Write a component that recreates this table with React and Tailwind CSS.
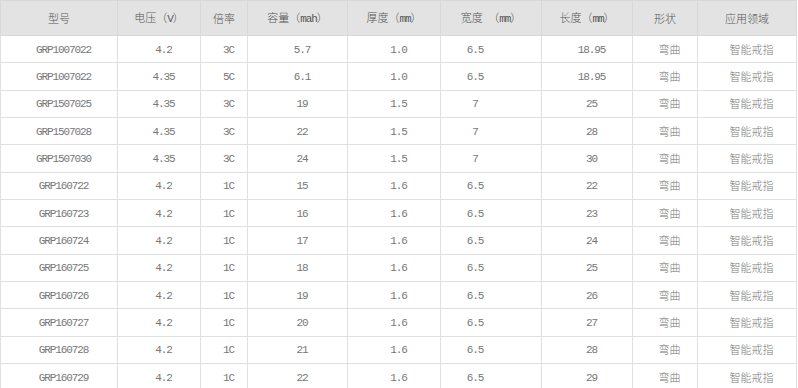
import React from "react";

const rows = [
  ["GRP1007022", "4.2", "3C", "5.7", "1.0", "6.5", "18.95"],
  ["GRP1007022", "4.35", "5C", "6.1", "1.0", "6.5", "18.95"],
  ["GRP1507025", "4.35", "3C", "19", "1.5", "7", "25"],
  ["GRP1507028", "4.35", "3C", "22", "1.5", "7", "28"],
  ["GRP1507030", "4.35", "3C", "24", "1.5", "7", "30"],
  ["GRP160722", "4.2", "1C", "15", "1.6", "6.5", "22"],
  ["GRP160723", "4.2", "1C", "16", "1.6", "6.5", "23"],
  ["GRP160724", "4.2", "1C", "17", "1.6", "6.5", "24"],
  ["GRP160725", "4.2", "1C", "18", "1.6", "6.5", "25"],
  ["GRP160726", "4.2", "1C", "19", "1.6", "6.5", "26"],
  ["GRP160727", "4.2", "1C", "20", "1.6", "6.5", "27"],
  ["GRP160728", "4.2", "1C", "21", "1.6", "6.5", "28"],
  ["GRP160729", "4.2", "1C", "22", "1.6", "6.5", "29"],
];

const headers = ["型号", "电压（V）", "倍率", "容量（mah）", "厚度（mm）", "宽度 （mm）", "长度（mm）", "形状", "应用领域"];
const widths = ["w-[117px]", "w-[83px]", "w-[47px]", "w-[100px]", "w-[93px]", "w-[101px]", "w-[91px]", "w-[65px]", "w-[99px]"];

function T({ s }) {
  const parts = s.match(/[\x00-\x7f]+|[^\x00-\x7f]+/g) || [];
  return (
    <>
      {parts.map((p, i) =>
        /^[\x00-\x7f]+$/.test(p) ? (
          <span key={i} className="font-['Liberation_Mono',monospace] tracking-[-1.1px] whitespace-pre">{p}</span>
        ) : (
          <span key={i} className="font-['Noto_Sans_CJK_SC',sans-serif] font-light">{p}</span>
        )
      )}
    </>
  );
}

export default function App() {
  return (
    <div className="w-[798px] h-[388px] overflow-hidden bg-white">
      <table className="table-fixed border-collapse w-[796px] text-[11px] leading-none">
        <colgroup>
          {widths.map((w, i) => (
            <col key={i} className={w} />
          ))}
        </colgroup>
        <thead>
          <tr className="h-[35px] bg-[#e3e3e3]">
            {headers.map((h, i) => (
              <th key={i} className="border border-[#d8d8d8] text-center font-normal text-[#555] align-middle p-0 pt-px">
                <T s={h} />
              </th>
            ))}
          </tr>
        </thead>
        <tbody>
          {rows.map((r, ri) => (
            <tr key={ri} className="h-[27.33px]">
              {[...r, "弯曲", "智能戒指"].map((c, ci) => (
                <td
                  key={ci}
                  className={
                    "border border-[#e0e0e0] text-center text-[#777] align-middle p-0 " +
                    (ci === 5 ? "pr-[32px]" : "pl-[9px]")
                  }
                >
                  <T s={c} />
                </td>
              ))}
            </tr>
          ))}
        </tbody>
      </table>
    </div>
  );
}
